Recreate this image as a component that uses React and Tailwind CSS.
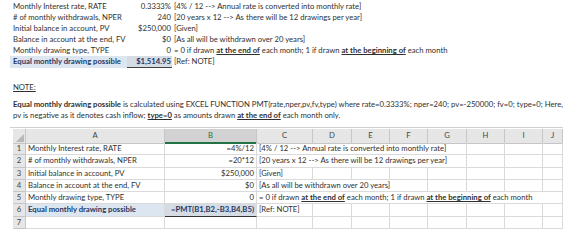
import React from "react";

const Top = ({ label, value, note, hl }) => (
  <div className="grid grid-cols-[117px_45px_1fr] h-[11px] leading-[11px] whitespace-nowrap">
    <div className={hl ? "pl-[3px] bg-[#dce6f1] font-bold text-[#1f3864]" : "pl-[3px]"}>{label}</div>
    <div className={hl ? "text-right bg-[#d6dce4] border-b border-[#404040] font-bold text-[#1f3864] pr-[1px]" : "text-right pr-[1px]"}>{value}</div>
    <div className="pl-[2px]">{note}</div>
  </div>
);

const BU = ({ children }) => <span className="font-bold underline">{children}</span>;

const cols = ["A", "B", "C", "D", "E", "F", "G", "H", "I", "J"];

const rows = [
  { a: "Monthly Interest rate, RATE", b: "=4%/12", c: "[4% / 12 --> Annual rate is converted into monthly rate]", span: 5 },
  { a: "# of monthly withdrawals, NPER", b: "=20*12", c: "[20 years x 12 --> As there will be 12 drawings per year]", span: 5 },
  { a: "Initial balance in account, PV", b: "$250,000", c: "[Given]", span: 1 },
  { a: "Balance in account at the end, FV", b: "$0", c: "[As all will be withdrawn over 20 years]", span: 4 },
  {
    a: "Monthly drawing type, TYPE",
    b: "0",
    c: (
      <>
        = 0 if drawn <BU>at the end of</BU> each month; 1 if drawn <BU>at the beginning of</BU> each month
      </>
    ),
    span: 8,
  },
  { a: "Equal monthly drawing possible", b: "=PMT(B1,B2,-B3,B4,B5)", c: "[Ref: NOTE]", span: 1, hl: true },
  { a: "", b: "", c: "", span: 1 },
];

const spanCls = {
  1: "col-span-1",
  4: "col-span-4",
  5: "col-span-5",
  8: "col-span-8",
};

const gridCols = "grid grid-cols-[13px_139px_92px_56px_39px_38px_38px_39px_38px_38px_20px]";

export default function App() {
  return (
    <div className="w-[580px] h-[240px] bg-white overflow-hidden font-['Lato',sans-serif] text-[7.7px] text-[#2f2f2f]">
      <div className="pl-[10px] pt-[1px]">
        <Top label="Monthly Interest rate, RATE" value="0.3333%" note="[4% / 12 --> Annual rate is converted into monthly rate]" />
        <Top label="# of monthly withdrawals, NPER" value="240" note="[20 years x 12 --> As there will be 12 drawings per year]" />
        <Top label="Initial balance in account, PV" value="$250,000" note="[Given]" />
        <Top label="Balance in account at the end, FV" value="$0" note="[As all will be withdrawn over 20 years]" />
        <Top
          label="Monthly drawing type, TYPE"
          value="0"
          note={
            <>
              = 0 if drawn <BU>at the end of</BU> each month; 1 if drawn <BU>at the beginning of</BU> each month
            </>
          }
        />
        <Top label="Equal monthly drawing possible" value="$1,514.95" note="[Ref: NOTE]" hl />
      </div>

      <div className="pl-[13px] mt-[15px] leading-[11px] underline">NOTE:</div>

      <div className="pl-[13px] mt-[6px] leading-[11px] whitespace-nowrap">
        <span className="font-bold">Equal monthly drawing possible</span> is calculated using EXCEL FUNCTION
        PMT(rate,nper,pv,fv,type) where rate=0.3333%; nper=240; pv=-250000; fv=0; type=0; Here,
        <br />
        pv is negative as it denotes cash inflow; <BU>type=0</BU> as amounts drawn <BU>at the end of</BU> each month only.
      </div>

      <div className="ml-[10px] w-[553px] mt-[6px] border-t border-[#d0d0d0]" />

      <div className="ml-[13px] mt-[1px] w-[550px]">
        <div className={`${gridCols} h-[14px] leading-[13px] text-center text-[#444]`}>
          <div className="relative bg-[#e6e6e6] border-r border-b border-[#c6c6c6]">
            <div className="absolute right-[1px] bottom-[1px] w-0 h-0 border-l-[8px] border-l-transparent border-b-[8px] border-b-[#b8b8b8]" />
          </div>
          {cols.map((c) =>
            c === "B" ? (
              <div key={c} className="bg-[#d2d2d2] border-r border-[#c6c6c6] border-b-2 border-b-[#217346] text-[#217346]">
                {c}
              </div>
            ) : (
              <div key={c} className="bg-[#e6e6e6] border-r border-b border-[#c6c6c6]">
                {c}
              </div>
            )
          )}
        </div>
        {rows.map((r, i) => {
          const used = 3 + r.span;
          const rest = 11 - used;
          return (
            <div key={i} className={`${gridCols} h-[12.3px] leading-[11.3px] whitespace-nowrap`}>
              <div className="bg-[#e6e6e6] text-center border-r border-b border-[#c6c6c6] text-[#444]">{i + 1}</div>
              <div
                className={
                  r.hl
                    ? "pl-[2px] bg-[#dce6f1] font-bold text-[#1f3864] border-r border-b border-[#dadada]"
                    : "pl-[2px] border-r border-b border-[#dadada]"
                }
              >
                {r.a}
              </div>
              <div
                className={
                  r.hl
                    ? "text-right pr-[2px] bg-[#d6dce4] font-bold text-[#1f3864] border-r border-[#dadada] border-b border-b-[#333]"
                    : "text-right pr-[2px] border-r border-b border-[#dadada]"
                }
              >
                {r.b}
              </div>
              <div className={`${spanCls[r.span]} pl-[2px] border-r border-b border-[#dadada] overflow-visible`}>{r.c}</div>
              {Array.from({ length: rest }).map((_, k) => (
                <div key={k} className="border-r border-b border-[#dadada]" />
              ))}
            </div>
          );
        })}
      </div>
    </div>
  );
}
